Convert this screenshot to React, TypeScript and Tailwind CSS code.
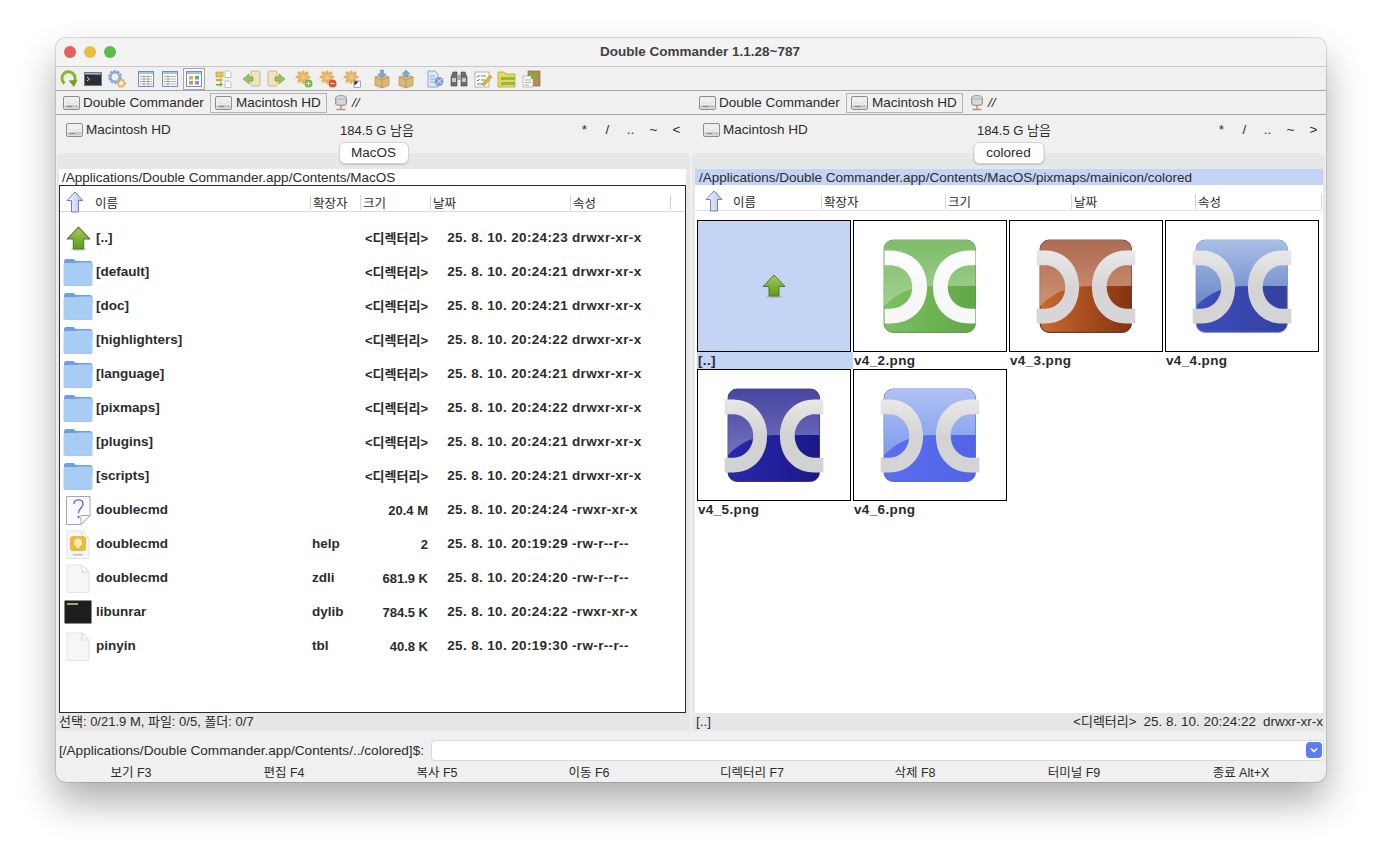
import type { ReactNode } from 'react';

const FONT = "[font-family:'Liberation_Sans','Noto_Sans_CJK_KR',sans-serif]";

type RowKind = 'up' | 'folder' | 'unknown' | 'help' | 'blank' | 'exec';

type Row = { name: string; ext: string; size: string; date: string; attr: string; kind: RowKind };

const DIR = '<디렉터리>';

const ROWS: Row[] = [
  { name: '[..]', ext: '', size: DIR, date: '25. 8. 10. 20:24:23', attr: 'drwxr-xr-x', kind: 'up' },
  { name: '[default]', ext: '', size: DIR, date: '25. 8. 10. 20:24:21', attr: 'drwxr-xr-x', kind: 'folder' },
  { name: '[doc]', ext: '', size: DIR, date: '25. 8. 10. 20:24:21', attr: 'drwxr-xr-x', kind: 'folder' },
  { name: '[highlighters]', ext: '', size: DIR, date: '25. 8. 10. 20:24:22', attr: 'drwxr-xr-x', kind: 'folder' },
  { name: '[language]', ext: '', size: DIR, date: '25. 8. 10. 20:24:21', attr: 'drwxr-xr-x', kind: 'folder' },
  { name: '[pixmaps]', ext: '', size: DIR, date: '25. 8. 10. 20:24:22', attr: 'drwxr-xr-x', kind: 'folder' },
  { name: '[plugins]', ext: '', size: DIR, date: '25. 8. 10. 20:24:21', attr: 'drwxr-xr-x', kind: 'folder' },
  { name: '[scripts]', ext: '', size: DIR, date: '25. 8. 10. 20:24:21', attr: 'drwxr-xr-x', kind: 'folder' },
  { name: 'doublecmd', ext: '', size: '20.4 M', date: '25. 8. 10. 20:24:24', attr: '-rwxr-xr-x', kind: 'unknown' },
  { name: 'doublecmd', ext: 'help', size: '2', date: '25. 8. 10. 20:19:29', attr: '-rw-r--r--', kind: 'help' },
  { name: 'doublecmd', ext: 'zdli', size: '681.9 K', date: '25. 8. 10. 20:24:20', attr: '-rw-r--r--', kind: 'blank' },
  { name: 'libunrar', ext: 'dylib', size: '784.5 K', date: '25. 8. 10. 20:24:22', attr: '-rwxr-xr-x', kind: 'exec' },
  { name: 'pinyin', ext: 'tbl', size: '40.8 K', date: '25. 8. 10. 20:19:30', attr: '-rw-r--r--', kind: 'blank' },
];

function HardDisk() {
  return (
    <svg width="17" height="16" viewBox="0 0 17 16" className="shrink-0">
      <rect x="0.5" y="1.5" width="16" height="13" rx="1.5" fill="#efefef" stroke="#8d8d8d" />
      <rect x="1.5" y="10" width="14" height="3.5" fill="#c9c9c9" />
      <path d="M2 7 L8.5 9 L15 7" fill="none" stroke="#dcdcdc" />
      <rect x="4" y="11" width="5" height="1" fill="#8d8d8d" />
    </svg>
  );
}

function NetDisk() {
  return (
    <svg width="14" height="16" viewBox="0 0 14 16" className="shrink-0">
      <ellipse cx="7" cy="3" rx="5.5" ry="2.5" fill="#d8d8d8" stroke="#9a9a9a" />
      <path d="M1.5 3 V9 C1.5 11 12.5 11 12.5 9 V3" fill="#c4c4c4" stroke="#9a9a9a" />
      <path d="M3 6 H11 M3 8 H11" stroke="#eeeeee" />
      <path d="M7 11 V13.5 M2.5 14.5 H11.5" stroke="#b98f6a" strokeWidth="1.5" />
    </svg>
  );
}

function BlueUpArrow() {
  return (
    <svg width="18" height="22" viewBox="0 0 18 22" className="shrink-0">
      <defs>
        <linearGradient id="blueUp" x1="0" x2="1" y1="0" y2="0">
          <stop offset="0" stopColor="#f4f7ff" />
          <stop offset="1" stopColor="#b3c4e8" />
        </linearGradient>
      </defs>
      <path d="M9 1 L17 9.5 H12.5 V21 H5.5 V9.5 H1 Z" fill="url(#blueUp)" stroke="#6f83b8" strokeLinejoin="round" />
    </svg>
  );
}

function GreenUpArrow({ id, size }: { id: string; size: number }) {
  return (
    <svg width={size} height={size} viewBox="0 0 24 24" className="shrink-0">
      <defs>
        <linearGradient id={id} x1="0" x2="0" y1="0" y2="1">
          <stop offset="0" stopColor="#a6c86e" />
          <stop offset="0.5" stopColor="#7fb33a" />
          <stop offset="1" stopColor="#5f9a1e" />
        </linearGradient>
      </defs>
      <ellipse cx="12" cy="22.5" rx="8" ry="1.5" fill="#00000022" />
      <path d="M12 1 L23 12.5 H17 V22 H7 V12.5 H1 Z" fill={`url(#${id})`} stroke="#55752a" strokeLinejoin="round" />
    </svg>
  );
}

function Folder() {
  return (
    <svg width="30" height="28" viewBox="0 0 30 28" className="shrink-0">
      <path d="M1 3.5 C1 2 2 1 3 1 H10 C11.5 1 12 3 13.5 3 H27 C28.5 3 29.5 4 29.5 6 V12 H1 Z" fill="#6e9fe3" />
      <path d="M0.5 7 C0.5 5.5 1.5 5 3 5 H14 L16 4.5 H27.5 C29 4.5 29.5 5.5 29.5 7 V25 C29.5 26.5 28.5 27.5 27 27.5 H3 C1.5 27.5 0.5 26.5 0.5 25 Z" fill="#a8cdf5" />
      <path d="M0.5 25 C0.5 26.5 1.5 27.5 3 27.5 H27 C28.5 27.5 29.5 26.5 29.5 25 V26 C29.5 27 28.5 28 27 28 H3 C1.5 28 0.5 27 0.5 26 Z" fill="#7fa4d4" />
    </svg>
  );
}

function BlankPage({ children }: { children?: ReactNode }) {
  return (
    <svg width="24" height="29" viewBox="0 0 24 29" className="shrink-0">
      <path d="M1 1 H16 L23 8 V27.5 C23 28 22.5 28.5 22 28.5 H2 C1.5 28.5 1 28 1 27.5 Z" fill="#f6f6f6" stroke="#e2e2e2" />
      <path d="M16 1 V8 H23 Z" fill="#ffffff" stroke="#d8d8d8" />
      {children}
    </svg>
  );
}

function RowIcon({ kind }: { kind: RowKind }) {
  if (kind === 'up') return <GreenUpArrow id="rowUp" size={25} />;
  if (kind === 'folder') return <Folder />;
  if (kind === 'blank') return <BlankPage />;
  if (kind === 'help') {
    return (
      <BlankPage>
        <rect x="4" y="6" width="16" height="15" rx="3" fill="#e9bc3c" />
        <circle cx="12" cy="12.5" r="4" fill="#f8e9b0" />
        <rect x="10.5" y="16" width="3" height="2" fill="#f8e9b0" />
        <rect x="7" y="24" width="10" height="1.5" fill="#bdbdbd" />
      </BlankPage>
    );
  }
  if (kind === 'unknown') {
    return (
      <svg width="25" height="29" viewBox="0 0 25 29" className="shrink-0">
        <path d="M0.5 0.5 H24 V19.5 L15 28.5 H0.5 Z" fill="#fafbff" stroke="#a8a8a8" />
        <path d="M24 19.5 H15 V28.5 Z" fill="#ffffff" stroke="#a8a8a8" />
        <path d="M8 8 C8 2.5 17 2.5 17 8 C17 12 12.5 12 12.5 17" fill="none" stroke="#6868c0" strokeWidth="1.4" />
        <circle cx="12.5" cy="21" r="1.2" fill="#6868c0" />
      </svg>
    );
  }
  return (
    <svg width="28" height="24" viewBox="0 0 28 24" className="shrink-0">
      <rect x="0.5" y="0.5" width="27" height="23" rx="1" fill="#1e1e1c" stroke="#8a8a8a" />
      <rect x="3" y="3" width="11" height="2" fill="#9aa86a" />
    </svg>
  );
}

function Ic({ children }: { children: ReactNode }) {
  return (
    <svg width="20" height="20" viewBox="0 0 20 20" className="shrink-0">
      {children}
    </svg>
  );
}

function Flower({ mark }: { mark: 'add' | 'remove' | 'cfg' }) {
  return (
    <Ic>
      <g fill="none" stroke="#e2b364" strokeWidth="3.2" strokeLinecap="round">
        <path d="M9 3 V13.5 M3 8 H15 M5 4 L13 12 M13 4 L5 12" />
      </g>
      <circle cx="9" cy="8" r="2.6" fill="#eec684" />
      {mark === 'add' && (
        <>
          <circle cx="14.5" cy="14.5" r="4" fill="#7ab648" />
          <path d="M12.5 14.5 H16.5 M14.5 12.5 V16.5" stroke="#ffffff" />
        </>
      )}
      {mark === 'remove' && (
        <>
          <circle cx="14.5" cy="14.5" r="4" fill="#d4573a" />
          <path d="M12.5 14.5 H16.5" stroke="#ffffff" strokeWidth="1.2" />
        </>
      )}
      {mark === 'cfg' && (
        <>
          <rect x="12" y="12" width="6.5" height="6.5" fill="#ffffff" stroke="#555555" strokeWidth="0.5" />
          <path d="M12.5 12.5 H16.5 L12.5 16.5 Z" fill="#111111" />
        </>
      )}
    </Ic>
  );
}

function Box({ flip }: { flip?: boolean }) {
  return (
    <Ic>
      <path d="M3 8 L10 5.5 L17 8 V16.5 L10 19 L3 16.5 Z" fill="#d9b878" stroke="#ad8a4e" strokeWidth="0.6" />
      <path d="M3 8 L10 11 L17 8 M10 11 V19" fill="none" stroke="#ad8a4e" strokeWidth="0.7" />
      <path d={flip ? 'M10 1 L14 5 H11.5 V8 H8.5 V5 H6 Z' : 'M10 9 L14 5 H11.5 V1 H8.5 V5 H6 Z'} fill="#7aa6e2" stroke="#5b88c4" strokeWidth="0.5" />
    </Ic>
  );
}

function ListView({ grid }: { grid?: boolean }) {
  return (
    <Ic>
      <rect x="2.5" y="2.5" width="15" height="15" fill="#ffffff" stroke="#6f8fc0" />
      <rect x="3" y="3" width="14" height="2" fill="#a9c0e2" />
      {grid ? (
        <path d="M4 7.5 H16 M4 10 H16 M4 12.5 H16 M4 15 H16 M8 6 V17 M12 6 V17" stroke="#9a9a9a" strokeWidth="0.8" />
      ) : (
        <path d="M4 7.5 H16 M4 10 H16 M4 12.5 H16 M4 15 H16 M8 6 V17" stroke="#9a9a9a" strokeWidth="0.8" />
      )}
    </Ic>
  );
}

const TOOLS: { x: number; icon: ReactNode; on?: boolean }[] = [
  {
    x: 0,
    icon: (
      <Ic>
        <path d="M5.5 14.5 A6.6 6.6 0 1 1 15 13" fill="none" stroke="#8ab52e" strokeWidth="3" />
        <path d="M6 12 A3.6 3.6 0 1 1 12.5 12" fill="none" stroke="#e4edb8" strokeWidth="1" />
        <path d="M9.5 11.5 L18.5 11 L15 18 Z" fill="#7a9e28" />
      </Ic>
    ),
  },
  {
    x: 1,
    icon: (
      <Ic>
        <rect x="1.5" y="3.5" width="17" height="13" fill="#2c3036" stroke="#6f7780" />
        <rect x="2" y="4" width="16" height="1.6" fill="#9fb2c8" />
        <path d="M4 8 L6.5 10 L4 12" fill="none" stroke="#e8e8e8" strokeWidth="0.9" />
      </Ic>
    ),
  },
  {
    x: 2,
    icon: (
      <Ic>
        <circle cx="8" cy="8" r="5.5" fill="none" stroke="#7f9bd0" strokeWidth="2.6" strokeDasharray="2.4 1" />
        <circle cx="8" cy="8" r="4.4" fill="none" stroke="#8faad8" strokeWidth="2" />
        <circle cx="14.2" cy="14.2" r="3.4" fill="none" stroke="#e2ad4a" strokeWidth="2.4" strokeDasharray="2 0.8" />
      </Ic>
    ),
  },
  { x: 3, icon: <ListView grid /> },
  { x: 4, icon: <ListView /> },
  {
    x: 5,
    on: true,
    icon: (
      <Ic>
        <rect x="2.5" y="2.5" width="15" height="15" fill="#ffffff" stroke="#6f8fc0" />
        <rect x="3" y="3" width="14" height="2" fill="#a9c0e2" />
        <rect x="5" y="7" width="4" height="3.5" fill="#e0b23c" />
        <rect x="11" y="7" width="4" height="3.5" fill="#6fa86f" />
        <rect x="5" y="12" width="4" height="3.5" fill="#df8f4f" />
        <rect x="11" y="12" width="4" height="3.5" fill="#a97fd0" />
      </Ic>
    ),
  },
  {
    x: 6,
    icon: (
      <Ic>
        <rect x="3" y="3" width="7" height="5" fill="#e4c35a" stroke="#b8982f" strokeWidth="0.6" />
        <path d="M12 2 H16 L18 4 V8.5 H12 Z M12 12 H16 L18 14 V18.5 H12 Z" fill="#ffffff" stroke="#a8a8a8" strokeWidth="0.7" />
        <path d="M3 10 H7 V8.5 L10 11 L7 13.5 V12 H3 Z" fill="#d9a93a" />
        <path d="M3 15 H7 V13 L10 15.5 L7 18 V16.5 H3 Z" fill="#7fae3c" />
      </Ic>
    ),
  },
  {
    x: 7,
    icon: (
      <Ic>
        <rect x="9" y="2" width="9" height="15" rx="1" fill="#efe4c4" stroke="#b9a878" strokeWidth="0.7" />
        <path d="M1 10 L7 5 V8 H11 V12 H7 V15 Z" fill="#9cc25a" stroke="#6f9a2c" strokeWidth="0.6" />
      </Ic>
    ),
  },
  {
    x: 8,
    icon: (
      <Ic>
        <rect x="2" y="2" width="9" height="15" rx="1" fill="#efe4c4" stroke="#b9a878" strokeWidth="0.7" />
        <path d="M19 10 L13 5 V8 H9 V12 H13 V15 Z" fill="#9cc25a" stroke="#6f9a2c" strokeWidth="0.6" />
      </Ic>
    ),
  },
  { x: 9, icon: <Flower mark="add" /> },
  { x: 10, icon: <Flower mark="remove" /> },
  { x: 11, icon: <Flower mark="cfg" /> },
  { x: 12, icon: <Box /> },
  { x: 13, icon: <Box flip /> },
  {
    x: 14,
    icon: (
      <Ic>
        <path d="M3 2 H10 L13 5 V18 H3 Z" fill="#dfe8f5" stroke="#7a97c4" strokeWidth="0.8" />
        <path d="M5 7 H10 M5 10 H10 M5 13 H9" stroke="#7a97c4" strokeWidth="0.8" />
        <circle cx="14" cy="12.5" r="4.5" fill="#7f9fd4" />
        <path d="M11.5 15 L16.5 10 M12.5 10.5 L16.5 14.5" stroke="#dfe8f5" />
      </Ic>
    ),
  },
  {
    x: 15,
    icon: (
      <Ic>
        <path d="M2 8 L4 3 H8 V17 H2 Z M18 8 L16 3 H12 V17 H18 Z" fill="#6f6f6f" stroke="#3f3f3f" strokeWidth="0.6" />
        <rect x="8" y="6" width="4" height="5" fill="#a8a8a8" />
        <rect x="3" y="9" width="4" height="4" fill="#c8c8c8" />
        <rect x="13" y="9" width="4" height="4" fill="#c8c8c8" />
      </Ic>
    ),
  },
  {
    x: 16,
    icon: (
      <Ic>
        <rect x="2" y="3" width="14" height="15" fill="#fbfbf5" stroke="#a8a8a8" strokeWidth="0.8" />
        <path d="M4 7 L5 8 L6.5 6 M4 11 L5 12 L6.5 10 M8 7 H13 M8 11 H12 M4 15 H10" fill="none" stroke="#555555" strokeWidth="0.8" />
        <path d="M9 15 L17 6 L19 8 L11 17 Z" fill="#e0b23c" stroke="#a5802a" strokeWidth="0.5" />
      </Ic>
    ),
  },
  {
    x: 17,
    icon: (
      <Ic>
        <path d="M1 3 H7 L9 5 H18 V18 H1 Z" fill="#e8d55e" stroke="#b59f2e" strokeWidth="0.7" />
        <rect x="4" y="8" width="14" height="3" fill="#8dbb44" />
        <rect x="4" y="13" width="14" height="3" fill="#8dbb44" />
      </Ic>
    ),
  },
  {
    x: 18,
    icon: (
      <Ic>
        <rect x="7" y="2" width="12" height="15" fill="#b58a52" stroke="#7f5f30" strokeWidth="0.6" />
        <path d="M2 7 H12 V18 H2 Z" fill="#f7f7f2" stroke="#a8a8a8" strokeWidth="0.7" />
        <path d="M4 11 H10 M4 13.5 H10 M4 16 H8" stroke="#9a9a9a" strokeWidth="0.8" />
        <path d="M8 7 L12 2 L16 7 H14 V10 H10 V7 Z" fill="#7fae3c" />
      </Ic>
    ),
  },
];

// gaps between the toolbar icons, grouped like the real toolbar
const TOOL_GAPS = [0, 2, 2, 7, 2, 2, 7, 7, 2, 6, 2, 2, 8, 2, 7, 2, 2, 2, 2];

function DriveBar() {
  return (
    <div className="flex items-center h-full pl-[7px]">
      <HardDisk />
      <span className="ml-[3px] w-[127px] pt-[1px]">Double Commander</span>
      <div className="flex items-center h-[20px] w-[117px] border border-[#b4b4b4] pl-[4px] gap-[4px]">
        <HardDisk />
        <span className="pt-[1px] whitespace-nowrap">Macintosh HD</span>
      </div>
      <div className="ml-[7px]">
        <NetDisk />
      </div>
      <span className="ml-[4px] italic pt-[1px]">//</span>
    </div>
  );
}

function InfoRow({ last, pad, symPad }: { last: string; pad: string; symPad: string }) {
  return (
    <div className={`grid grid-cols-[261px_100px_1fr] items-center h-[28px] pt-[2px] ${pad}`}>
      <div className="flex items-center gap-[3px]">
        <HardDisk />
        <span>Macintosh HD</span>
      </div>
      <div className="text-center whitespace-nowrap text-[13px]">184.5 G 남음</div>
      <div className={`grid grid-cols-[repeat(5,23px)] justify-end text-center ${symPad}`}>
        <span>*</span>
        <span>/</span>
        <span>..</span>
        <span>~</span>
        <span>{last}</span>
      </div>
    </div>
  );
}

function TabPill({ label, w }: { label: string; w: string }) {
  return (
    <div className={`absolute left-1/2 -translate-x-1/2 -top-[11px] h-[22px] ${w} rounded-[6px] bg-white border border-[#d4d4d4] shadow-[0_1px_1px_rgba(0,0,0,0.15)] flex items-center justify-center`}>
      {label}
    </div>
  );
}

function HeaderCell({ label, w, first }: { label: string; w: string; first?: boolean }) {
  return (
    <div className={`${w} shrink-0 pl-[2px] pt-[4px] h-[15px] flex items-center whitespace-nowrap text-[12.5px] ${first ? '' : 'border-l border-[#d4d4d4]'}`}>
      {label}
    </div>
  );
}

type LogoColors = {
  id: string;
  top: string;
  mid: string;
  lowL: string;
  lowR: string;
  edge: string;
  band: string;
  band2: string;
  green?: boolean;
};

const LOGOS: LogoColors[] = [
  { id: 'logo2', top: '#7fbb6b', mid: '#a2d28f', lowL: '#7cc064', lowR: '#5fa845', edge: '#5f8f50', band: '#ffffff', band2: '#f8f8f8', green: true },
  { id: 'logo3', top: '#ab6b52', mid: '#d09274', lowL: '#c9692f', lowR: '#85330f', edge: '#4f2a30', band: '#e8e8e8', band2: '#d6d6d6' },
  { id: 'logo4', top: '#a9bfe6', mid: '#6a86c8', lowL: '#3f4dc0', lowR: '#33409f', edge: '#7f94c8', band: '#e8e8e8', band2: '#d4d4d4' },
  { id: 'logo5', top: '#47459f', mid: '#7272c0', lowL: '#2a27ac', lowR: '#1a1888', edge: '#2a2870', band: '#e8e8e8', band2: '#d2d2d2' },
  { id: 'logo6', top: '#afc2f2', mid: '#7f9bee', lowL: '#5a6eee', lowR: '#5264e6', edge: '#4d60dc', band: '#e8e8e8', band2: '#d4d4d4' },
];

function DcLogo({ c }: { c: LogoColors }) {
  const x0 = c.green ? 31 : 27;
  const x1 = c.green ? 123 : 127;
  const outerL = c.green ? 74 : 70;
  const innerL = c.green ? 59 : 56;
  const outerR = c.green ? 80 : 83;
  const innerR = c.green ? 95 : 98;
  return (
    <svg width="154" height="130" viewBox="0 1 154 130" className="block">
      <defs>
        <linearGradient id={c.id} x1="0" x2="0" y1="0" y2="1">
          <stop offset="0" stopColor={c.top} />
          <stop offset="1" stopColor={c.mid} />
        </linearGradient>
        <linearGradient id={`${c.id}l`} x1="0" x2="1" y1="0" y2="0">
          <stop offset="0" stopColor={c.lowL} />
          <stop offset="1" stopColor={c.lowR} />
        </linearGradient>
        <linearGradient id={`${c.id}b`} x1="0" x2="0" y1="0" y2="1">
          <stop offset="0" stopColor={c.band} />
          <stop offset="0.5" stopColor={c.band2} />
          <stop offset="1" stopColor={c.band2} />
        </linearGradient>
        <clipPath id={`${c.id}c`}>
          <rect x="30.5" y="19.5" width="92.5" height="93.5" rx="9" />
        </clipPath>
      </defs>
      <rect x="30.5" y="19.5" width="92.5" height="93.5" rx="9" fill={`url(#${c.id}l)`} stroke={c.edge} />
      <path d="M30 19 H124 V66 H82 C60 66 44 72 30 87 Z" fill={`url(#${c.id})`} clipPath={`url(#${c.id}c)`} />
      <path d={`M${x0} 30 H36 C${outerL - 14} 30 ${outerL} 46 ${outerL} 67 C${outerL} 88 ${outerL - 14} 104 36 104 H${x0} V89 H36 C${innerL - 10} 89 ${innerL} 80 ${innerL} 67 C${innerL} 54 ${innerL - 10} 45 36 45 H${x0} Z`} fill={`url(#${c.id}b)`} />
      <path d={`M${x1} 30 H118 C${outerR + 14} 30 ${outerR} 46 ${outerR} 67 C${outerR} 88 ${outerR + 14} 104 118 104 H${x1} V89 H118 C${innerR + 10} 89 ${innerR} 80 ${innerR} 67 C${innerR} 54 ${innerR + 10} 45 118 45 H${x1} Z`} fill={`url(#${c.id}b)`} />
    </svg>
  );
}

function ThumbCell({ label, selected, logo }: { label: string; selected?: boolean; logo?: LogoColors }) {
  return (
    <div className="w-[156px] h-[149px]">
      <div className={`w-[154px] h-[132px] border border-black flex items-center justify-center ${selected ? 'bg-[#c4d4f5]' : 'bg-white'}`}>
        {logo ? <DcLogo c={logo} /> : <GreenUpArrow id="thumbUp" size={24} />}
      </div>
      <div className={`h-[17px] pl-[1px] font-bold tracking-[0.35px] flex items-center ${selected ? 'bg-[#c4d4f5]' : ''}`}>{label}</div>
    </div>
  );
}

const FKEYS = [
  { label: '보기 F3', w: 'w-[150px]' },
  { label: '편집 F4', w: 'w-[156px]' },
  { label: '복사 F5', w: 'w-[150px]' },
  { label: '이동 F6', w: 'w-[154px]' },
  { label: '디렉터리 F7', w: 'w-[172px]' },
  { label: '삭제 F8', w: 'w-[154px]' },
  { label: '터미널 F9', w: 'w-[164px]' },
  { label: '종료 Alt+X', w: 'flex-1' },
];

export default function App() {
  return (
    <div className={`w-[1382px] h-[856px] bg-white pl-[56px] pt-[38px] overflow-hidden text-[13.5px] leading-none text-[#2b2b2b] ${FONT}`}>
      <div className="w-[1270px] h-[744px] rounded-[10px] bg-[#f0f0f0] shadow-[0_0_0_1px_rgba(0,0,0,0.12),0_20px_38px_rgba(0,0,0,0.32)] flex flex-col overflow-hidden">
        {/* title bar */}
        <div className="relative h-[29px] shrink-0 flex items-center justify-center pl-[18px] border-b border-[#c8c8c8] bg-[#f3f3f3]">
          <div className="absolute left-[8px] top-[8px] flex gap-[8px]">
            <div className="w-[12px] h-[12px] rounded-full bg-[#e5605a]" />
            <div className="w-[12px] h-[12px] rounded-full bg-[#ecbd3f]" />
            <div className="w-[12px] h-[12px] rounded-full bg-[#5fbc4c]" />
          </div>
          <span className="font-bold text-[#404040]">Double Commander 1.1.28~787</span>
        </div>

        {/* toolbar */}
        <div className="h-[24px] shrink-0 flex items-center pl-[2px] border-b border-[#a8a8a8]">
          {TOOLS.map((tool) => (
            <div
              key={tool.x}
              style={{ marginLeft: TOOL_GAPS[tool.x] }}
              className={`w-[22px] h-[22px] flex items-center justify-center ${tool.on ? 'border border-[#a8a8a8] bg-[#f6f6f6]' : ''}`}
            >
              {tool.icon}
            </div>
          ))}
        </div>

        {/* drive bars */}
        <div className="h-[24px] shrink-0 grid grid-cols-[636px_1fr] border-b border-[#a8a8a8]">
          <DriveBar />
          <DriveBar />
        </div>

        {/* drive info */}
        <div className="shrink-0 grid grid-cols-[636px_1fr]">
          <InfoRow last="<" pad="pl-[10px] pr-[1px]" symPad="pr-[3px]" />
          <InfoRow last=">" pad="pl-[11px]" symPad="pr-[1px]" />
        </div>

        {/* panels */}
        <div className="h-[578px] shrink-0 mt-[10px] grid grid-cols-[636px_1fr]">
          <div className="relative mr-[2px] ml-[1px] bg-[#e7e7e7] rounded-t-[5px] flex flex-col pt-[16px] pl-[2px] pr-[4px]">
            <TabPill label="MacOS" w="w-[70px]" />
            <div className="h-[16px] shrink-0 bg-white pl-[3px] pt-[2px] flex items-center">/Applications/Double Commander.app/Contents/MacOS</div>
            <div className="h-[528px] shrink-0 bg-white border border-[#2a2a2a] flex flex-col">
              <div className="h-[26px] shrink-0 flex items-center border-b border-[#dcdcdc] pl-[6px] pt-[7px]">
                <div className="w-[27px]">
                  <BlueUpArrow />
                </div>
                <HeaderCell first label="이름" w="w-[217px]" />
                <HeaderCell label="확장자" w="w-[50px]" />
                <HeaderCell label="크기" w="w-[70px]" />
                <HeaderCell label="날짜" w="w-[140px]" />
                <HeaderCell label="속성" w="w-[100px]" />
                <div className="border-l border-[#d4d4d4] h-[15px]" />
              </div>
              <div className="pt-[9px]">
                {ROWS.map((row, i) => (
                  <div key={i} className="h-[34px] grid grid-cols-[36px_216px_50px_66px_140px_1fr] items-center font-bold whitespace-nowrap">
                    <div className="flex justify-center">
                      <RowIcon kind={row.kind} />
                    </div>
                    <span>{row.name}</span>
                    <span>{row.ext}</span>
                    <span className="text-right text-[13px]">{row.size}</span>
                    <span className="text-right tracking-[0.35px]">{row.date}</span>
                    <span className="pl-[4px] tracking-[0.35px]">{row.attr}</span>
                  </div>
                ))}
              </div>
            </div>
            <div className="h-[17px] flex items-center text-[13px]">선택: 0/21.9 M, 파일: 0/5, 폴더: 0/7</div>
          </div>

          <div className="relative mr-[1px] bg-[#e7e7e7] rounded-t-[5px] flex flex-col pt-[16px] pl-[3px] pr-[2px]">
            <TabPill label="colored" w="w-[71px]" />
            <div className="h-[16px] shrink-0 bg-[#c4d4f5] pl-[4px] pt-[2px] flex items-center">/Applications/Double Commander.app/Contents/MacOS/pixmaps/mainicon/colored</div>
            <div className="h-[528px] shrink-0 bg-white flex flex-col">
              <div className="h-[26px] shrink-0 flex items-center border-b border-[#e2e2e2] pl-[10px] pt-[7px]">
                <div className="w-[26px]">
                  <BlueUpArrow />
                </div>
                <HeaderCell first label="이름" w="w-[90px]" />
                <HeaderCell label="확장자" w="w-[124px]" />
                <HeaderCell label="크기" w="w-[126px]" />
                <HeaderCell label="날짜" w="w-[124px]" />
                <HeaderCell label="속성" w="w-[126px]" />
                <div className="border-l border-[#d4d4d4] h-[15px]" />
              </div>
              <div className="pt-[9px] pl-[2px] flex flex-wrap">
                <ThumbCell label="[..]" selected />
                {LOGOS.map((logo, i) => (
                  <ThumbCell key={logo.id} label={`v4_${i + 2}.png`} logo={logo} />
                ))}
              </div>
            </div>
            <div className="h-[17px] flex items-center justify-between pl-[1px] whitespace-nowrap">
              <span>[..]</span>
              <span className="flex gap-[7px]">
                <span className="text-[13px]">{DIR}</span>
                <span>25. 8. 10. 20:24:22</span>
                <span>drwxr-xr-x</span>
              </span>
            </div>
          </div>
        </div>

        {/* command line */}
        <div className="h-[22px] shrink-0 mt-[8px] flex items-center pl-[3px] pr-[2px] gap-[2px]">
          <span className="whitespace-nowrap w-[370px] text-[13.6px] pt-[1px]">[/Applications/Double Commander.app/Contents/../colored]$:</span>
          <div className="flex-1 h-[21px] bg-white rounded-[4px] border border-[#dadada] flex items-center justify-end pr-[1px]">
            <div className="w-[16px] h-[16px] rounded-[4px] bg-[#5c7cf0] flex items-center justify-center">
              <svg width="8" height="6" viewBox="0 0 8 6">
                <path d="M1 1.5 L4 4.5 L7 1.5" fill="none" stroke="#ffffff" strokeWidth="1.6" />
              </svg>
            </div>
          </div>
        </div>

        {/* function keys */}
        <div className="flex-1 flex items-center pt-[3px] text-[12.5px]">
          {FKEYS.map((key) => (
            <div key={key.label} className={`${key.w} text-center whitespace-nowrap`}>
              {key.label}
            </div>
          ))}
        </div>
      </div>
    </div>
  );
}
